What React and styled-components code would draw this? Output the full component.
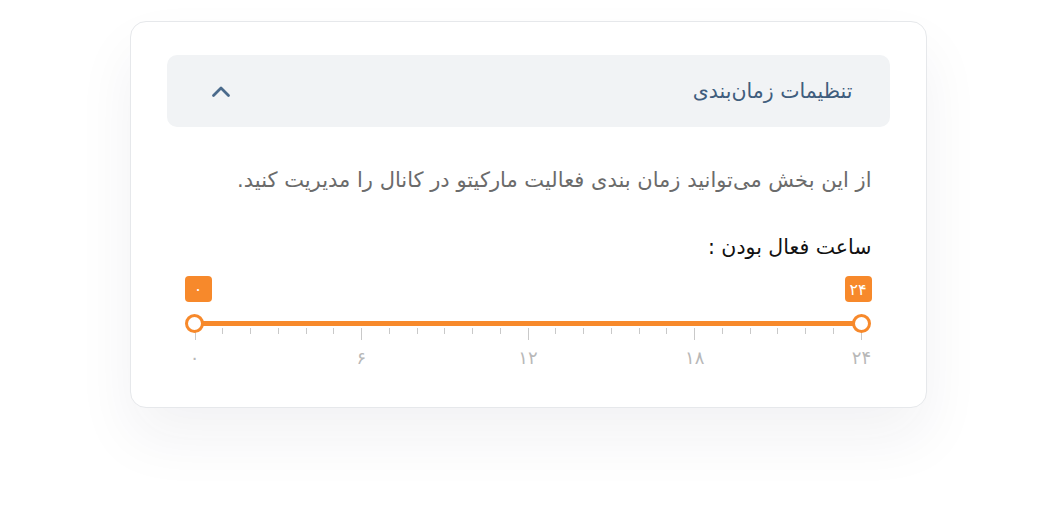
import React from 'react';
import styled, { createGlobalStyle } from 'styled-components';

const GlobalStyle = createGlobalStyle`
  html, body {
    height: 100%;
  }
  body {
    margin: 0;
    background: #fff;
    font-family: "DejaVu Sans", sans-serif;
  }
`;

const Card = styled.div`
  box-sizing: border-box;
  width: 797px;
  height: 387px;
  margin: 21px auto 0;
  padding: 33px 36px 0;
  background: #fff;
  border: 1px solid #e6e8eb;
  border-radius: 16px;
  box-shadow: 0 30px 60px rgba(30, 40, 60, 0.06);
  direction: rtl;
`;

const Header = styled.div`
  height: 72px;
  display: flex;
  align-items: center;
  justify-content: space-between;
  padding: 0 37px 0 44px;
  background: #f1f3f5;
  border-radius: 10px;
`;

const Title = styled.span`
  font-size: 20.5px;
  color: #3f5d7d;
`;

const Chevron = styled.svg`
  width: 20px;
  height: 13px;
  display: block;
`;

const Body = styled.div`
  padding: 0 18px;
`;

const Description = styled.p`
  margin: 39px 0 0;
  font-size: 21px;
  line-height: 28px;
  color: #6b6b6b;
`;

const FieldLabel = styled.div`
  margin-top: 39px;
  font-size: 20.5px;
  line-height: 28px;
  color: #111;
`;

const Slider = styled.div`
  direction: ltr;
  margin-top: 15px;
  padding: 0 10px;
`;

const TrackArea = styled.div`
  position: relative;
  padding: 45px 0 2px;
`;

const Track = styled.div`
  position: relative;
  height: 5px;
  border-radius: 3px;
  background: #f7892b;
`;

const Thumb = styled.div`
  position: absolute;
  top: -7px;
  left: ${(p) => p.$pos}%;
  width: 19px;
  height: 19px;
  box-sizing: border-box;
  margin-left: -9.5px;
  border: 3px solid #f7892b;
  border-radius: 50%;
  background: #fff;
  z-index: 2;
`;

const Badge = styled.div`
  position: absolute;
  top: 0;
  left: ${(p) => p.$pos}%;
  transform: translateX(${(p) => p.$shift}px);
  min-width: 27px;
  height: 26px;
  box-sizing: border-box;
  padding: 0 5px;
  display: flex;
  align-items: center;
  justify-content: center;
  border-radius: 4px;
  background: #f7892b;
  color: #fff;
  font-size: 16px;
`;

const Ticks = styled.div`
  display: flex;
  justify-content: space-between;
  align-items: flex-start;
  height: 12px;
`;

const Tick = styled.span`
  width: 1px;
  height: ${(p) => (p.$major ? 12 : 6)}px;
  background: #c9c9c9;
`;

const Labels = styled.div`
  display: flex;
  justify-content: space-between;
  margin-top: 8px;
`;

const TickLabel = styled.span`
  width: 0;
  display: flex;
  justify-content: center;
  white-space: nowrap;
  font-size: 18px;
  line-height: 20px;
  color: #b8b8b8;
`;

const labels = ['۰', '۶', '۱۲', '۱۸', '۲۴'];

export default function App() {
  return (
    <>
      <GlobalStyle />
      <Card>
        <Header>
          <Title>تنظیمات زمان‌بندی</Title>
          <Chevron viewBox="0 0 20 13">
            <polyline
              points="2.5,10.5 10,3 17.5,10.5"
              fill="none"
              stroke="#4a6a8b"
              strokeWidth="2.8"
              strokeLinecap="round"
              strokeLinejoin="round"
            />
          </Chevron>
        </Header>
        <Body>
          <Description>
            از این بخش می‌توانید زمان بندی فعالیت مارکیتو در کانال را مدیریت کنید.
          </Description>
          <FieldLabel>ساعت فعال بودن :</FieldLabel>
          <Slider>
            <TrackArea>
              <Badge $pos={0} $shift={-10}>۰</Badge>
              <Badge $pos={100} $shift={-17}>۲۴</Badge>
              <Track>
                <Thumb $pos={0} />
                <Thumb $pos={100} />
              </Track>
            </TrackArea>
            <Ticks>
              {Array.from({ length: 25 }, (_, i) => (
                <Tick key={i} $major={i % 6 === 0} />
              ))}
            </Ticks>
            <Labels>
              {labels.map((l) => (
                <TickLabel key={l}>{l}</TickLabel>
              ))}
            </Labels>
          </Slider>
        </Body>
      </Card>
    </>
  );
}
